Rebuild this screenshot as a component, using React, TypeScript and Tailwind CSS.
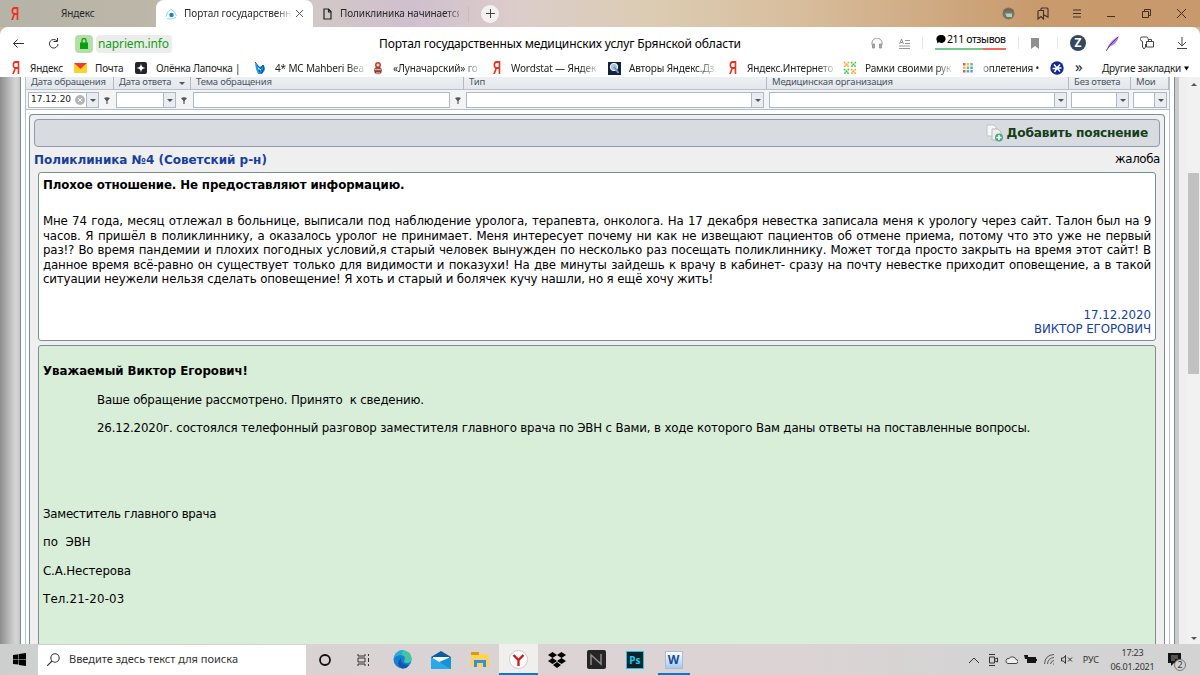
import type { ReactNode } from "react";

const ya = (
  <span className="inline-block w-4 text-center font-['Liberation_Sans'] text-[18px] font-bold leading-4 text-[#f0301c] scale-x-[.62]">
    Я
  </span>
);

const bookmarks = [
  { title: "Яндекс", width: "w-[65px]", icon: ya },
  {
    title: "Почта",
    width: "w-[61px]",
    icon: (
      <svg width="16" height="12" viewBox="0 0 16 12">
        <path d="M1 1h13v10H1z" fill="#fdd32a" />
        <path d="M1 1h13L7.500 7z" fill="#f03c2e" />
      </svg>
    ),
  },
  {
    title: "Олёнка Лапочка |",
    width: "w-[119px]",
    icon: (
      <svg width="14" height="14" viewBox="0 0 14 14">
        <rect x="1" y="1" width="12" height="12" rx="2" fill="#24252b" />
        <path d="M7 2.500 Q7.300 6.700 11.500 7 Q7.300 7.300 7 11.500 Q6.700 7.300 2.500 7 Q6.700 6.700 7 2.500" fill="#fff" />
      </svg>
    ),
  },
  {
    title: "4* MC Mahberi Bea",
    width: "w-[118px]",
    fade: true,
    icon: (
      <svg className="ml-px" width="12" height="14" viewBox="0 0 12 14">
        <path d="M1 2l4 4 5-2 1 5-3 4H4L2 8z" fill="#1d9be2" />
        <path d="M1 1l8 10M9 4l-4 6 3 2 2-5z" stroke="#0a4f93" fill="none" />
        <path d="M4 7l3 2" stroke="#fff" />
      </svg>
    ),
  },
  {
    title: "«Луначарский» го",
    width: "w-[118px]",
    fade: true,
    icon: (
      <svg className="ml-px" width="12" height="14" viewBox="0 0 12 14">
        <circle cx="6" cy="4" r="3" fill="#c0452c" />
        <circle cx="6" cy="9.500" r="3.800" fill="#7c3d6c" />
        <circle cx="6" cy="4" r="1.500" fill="#fbd89c" />
        <path d="M3 8.500h6M4 12h4" stroke="#f5a731" strokeWidth="1.500" />
      </svg>
    ),
  },
  { title: "Wordstat — Яндек", width: "w-[118px]", fade: true, icon: ya },
  {
    title: "Авторы Яндекс.Дз",
    width: "w-[118px]",
    fade: true,
    icon: (
      <svg width="14" height="14" viewBox="0 0 14 14">
        <path d="M1 1h13v13H1z" fill="#13233f" />
        <circle cx="7" cy="6" r="3.700" fill="#a9c5d8" stroke="#fff" />
        <path d="M7 6l4.500 6" stroke="#6d97c3" strokeWidth="2" />
      </svg>
    ),
  },
  { title: "Яндекс.Интернето", width: "w-[118px]", fade: true, icon: ya },
  {
    title: "Рамки своими рук",
    width: "w-[118px]",
    fade: true,
    icon: (
      <svg width="14" height="14" viewBox="0 0 14 14" strokeWidth="1.500" strokeDasharray="1.800 .6">
        <path d="M1 1l5 5M6 1L1 6M8 8l5 5M13 8l-5 5" stroke="#ff9c24" />
        <path d="M8 1l5 5M13 1L8 6M1 8l5 5M6 8l-5 5" stroke="#32cb3c" />
      </svg>
    ),
  },
];

const columns = [
  { title: "Дата обращения", width: "w-[88px]", input: "w-[71px]", value: "17.12.20", arrow: true, funnel: true },
  { title: "Дата ответа", width: "w-[77px]", input: "w-[60px]", arrow: true, funnel: true, sorted: true },
  { title: "Тема обращения", width: "w-[273px]", input: "w-[257px]", funnel: true },
  { title: "Тип", width: "w-[303px]", input: "w-[298px]", arrow: true },
  { title: "Медицинская организация", width: "w-[302px]", input: "w-[298px]", arrow: true },
  { title: "Без ответа", width: "w-[62px]", input: "w-[58px]", arrow: true },
  { title: "Мои", width: "w-[38px]", input: "w-[34px]", arrow: true },
];

const complaint = [
  "Мне 74 года, месяц отлежал в больнице, выписали под наблюдение уролога, терапевта, онколога. На 17 декабря невестка записала меня к урологу через сайт. Талон был на 9",
  "часов. Я пришёл в поликлиннику, а оказалось уролог не принимает. Меня интересует почему ни как не извещают пациентов об отмене приема, потому что это уже не первый",
  "раз!? Во время пандемии и плохих погодных условий,я старый человек вынужден по несколько раз посещать поликлиннику. Может тогда просто закрыть на время этот сайт! В",
  "данное время всё-равно он существует только для видимости и показухи! На две минуты зайдешь к врачу в кабинет- сразу на почту невестке приходит оповещение, а в такой",
];

function Arrow() {
  return <span className="block shrink-0 border-x-[3px] border-t-[3px] border-x-transparent border-t-[#555]" />;
}

function Funnel() {
  return (
    <svg className="ml-[5px] shrink-0" width="6" height="7" viewBox="0 0 6 7">
      <path d="M0 1q3-1.500 6 0L3.600 4v3H2.400V4z" fill="#555" />
    </svg>
  );
}

function Task({ children, className = "" }: { children: ReactNode; className?: string }) {
  return <div className={"flex h-full w-[38.700px] shrink-0 items-center justify-center " + className}>{children}</div>;
}

function Tabs() {
  return (
    <div className="flex h-[27px] shrink-0 items-center bg-[linear-gradient(90deg,#b5b4a7_0px,#bcb6a8_140px,#d2c8c6_313px,#d0bfce_410px,#dccdca_520px,#dcccb3_650px,#d8bd9c_800px,#c89a6c_1040px,#c8996c_1200px)] text-[10px] text-[#282828]">
      <div className="flex w-[156px] items-center pl-[7px]">
        {ya}
        <span className="ml-[38px] tracking-[-0.100px]">Яндекс</span>
      </div>
      <div className="flex h-full w-[157px] items-center rounded-t-lg bg-white">
        <svg className="ml-[9px] shrink-0" width="13" height="12" viewBox="0 0 13 12">
          <circle cx="6.500" cy="7" r="2.300" fill="#2388b8" />
          <path d="M1 8.500Q2 3 6 1.500q4 1.500 5.500 6.500M2 10.500q4 1.500 9-1" fill="none" stroke="#8bd7f0" />
        </svg>
        <span className="ml-[6px] w-[108px] overflow-hidden whitespace-nowrap tracking-[-0.050px] [mask-image:linear-gradient(90deg,#000_85%,transparent)]">
          Портал государственны
        </span>
        <svg className="ml-[4px] shrink-0" width="7" height="7" viewBox="0 0 7 7" stroke="#555">
          <path d="M0 0l7 7M7 0L0 7" />
        </svg>
      </div>
      <svg className="ml-[10px]" width="9" height="12" viewBox="0 0 9 12" fill="none" stroke="#222" strokeWidth="1.200">
        <path d="M1 1h4.500L8 3.500V11H1zM5.500 1v3H8" />
      </svg>
      <span className="ml-[8px] w-[119px] whitespace-nowrap tracking-[-0.100px] [mask-image:linear-gradient(90deg,#000_88%,#0006)]">
        Поликлиника начинается
      </span>
      <span className="ml-[9px] h-4 w-px bg-[#c9bcba]" />
      <span className="ml-3 flex size-[18px] items-center justify-center rounded-full bg-[#f5f1f0]">
        <svg width="9" height="9" viewBox="0 0 9 9" stroke="#444">
          <path d="M4.500 0v9M0 4.500h9" />
        </svg>
      </span>
      <div className="ml-auto flex items-center pr-[14px]">
        <svg width="13" height="13" viewBox="0 0 13 13">
          <circle cx="6.500" cy="6.500" r="6" fill="#6f7765" />
          <path d="M2 4q4-3 9 0" stroke="#8a5545" fill="none" strokeWidth="1.500" />
          <path d="M3 6.500h7v3.500H5z" fill="#b7ccc4" />
        </svg>
        <svg className="ml-[22px]" width="12" height="13" viewBox="0 0 12 13" fill="none" stroke="#3f3025" strokeWidth="1.100">
          <path d="M1 4.500a1 1 0 0 1 1-1h4.500v8.500L4 9.500 1 12zM4 3.500V2a1 1 0 0 1 1-1h5a1 1 0 0 1 1 1v8L7 8" />
        </svg>
        <svg className="ml-[24px]" width="8" height="9" viewBox="0 0 8 9" stroke="#3f3025">
          <path d="M0 1h8M0 4.500h8M0 8h8" />
        </svg>
        <svg className="ml-[26px]" width="9" height="9" viewBox="0 0 9 9" stroke="#3f3025">
          <path d="M0 7.500h8" />
        </svg>
        <svg className="ml-[26px]" width="9" height="9" viewBox="0 0 9 9" fill="none" stroke="#3f3025">
          <path d="M.5 2.500h6v6h-6zM2.500 2V.5h6v6H7" />
        </svg>
        <svg className="ml-[26px]" width="9" height="9" viewBox="0 0 9 9" stroke="#3f3025">
          <path d="M0 0l9 9M9 0L0 9" />
        </svg>
      </div>
    </div>
  );
}

function AddressBar() {
  return (
    <div className="relative flex h-[33px] shrink-0 items-center bg-[#cdb89f]">
      <div className="flex h-full w-full items-center rounded-t-lg bg-white pl-[13px] text-black">
        <svg width="11" height="9" viewBox="0 0 11 9" fill="none" stroke="#333">
          <path d="M11 4.500H.5M4.500.5l-4 4 4 4" />
        </svg>
        <svg className="ml-[24px]" width="11" height="11" viewBox="0 0 11 11" fill="none" stroke="#333">
          <path d="M9 3A4.300 4.300 0 1 0 10 6M5.500 3.500h4V0" />
        </svg>
        <span className="ml-[16px] flex size-[18px] items-center justify-center rounded bg-[#b3dfa9]">
          <svg width="8" height="11" viewBox="0 0 8 11">
            <path d="M0 4.500h8V11H0z" fill="#0ba00b" />
            <path d="M2 5V2.500a2 2 0 0 1 4 0V5" fill="none" stroke="#0ba00b" strokeWidth="1.300" />
          </svg>
        </span>
        <span className="ml-[3px] flex h-[18px] w-[76px] items-center rounded bg-[#ececec] pl-[2px] text-[12px] tracking-[-0.150px] text-[#12a012]">
          napriem.info
        </span>
        <span className="ml-[207px] whitespace-nowrap text-[12px] tracking-[-0.120px]">
          Портал государственных медицинских услуг Брянской области
        </span>
      </div>
      <div className="absolute right-0 top-0 flex h-8 items-center pr-[13px]">
        <svg width="12" height="11" viewBox="0 0 12 11" fill="none" stroke="#999">
          <path d="M1 7V5a5 5 0 0 1 10 0v2" />
          <path d="M1.500 6v4h2V6zM8.500 6v4h2V6z" fill="#aaa" />
        </svg>
        <svg className="ml-[16px]" width="11" height="11" viewBox="0 0 11 11" fill="none" stroke="#999">
          <path d="M.5 6l2-5 2 5M1 4.500h3M6 2.500h5M6 5.500h5M0 8h11M0 10.500h11" />
        </svg>
        <span className="ml-3 h-3 w-px bg-[#e5e5e5]" />
        <div className="ml-[12px] w-[71px] pb-[4px]">
          <div className="flex h-[14px] items-center whitespace-nowrap text-[10.500px] leading-3">
            <svg className="mx-px shrink-0" width="10" height="10" viewBox="0 0 10 10">
              <path d="M5 1a4 4 0 1 1-2 7L1.500 9.500 1 7A4 4 0 0 1 5 1" />
            </svg>
            <span className="tracking-[-0.400px]">211 отзывов</span>
          </div>
          <div className="mt-[2px] flex h-[2px]">
            <span className="w-12 bg-[#72c98b]" />
            <span className="flex-1 bg-[#f4695c]" />
          </div>
        </div>
        <span className="ml-[12px] h-3 w-px bg-[#e5e5e5]" />
        <svg className="ml-3" width="8" height="11" viewBox="0 0 8 11" fill="#909090">
          <path d="M0 0h8v11L4 8l-4 3z" />
        </svg>
        <span className="ml-[18px] h-3 w-px bg-[#e5e5e5]" />
        <span className="ml-[12px] flex size-4 items-center justify-center rounded-full bg-[#33485d] text-[12px] font-bold text-white">
          Z
        </span>
        <svg className="ml-[20px]" width="14" height="15" viewBox="0 0 14 15">
          <path d="M1 13Q4 4 13 0 11 8 3 11z" fill="#b077df" />
          <path d="M0 15Q4 8 12 1" stroke="#6c32a9" fill="none" />
        </svg>
        <svg className="ml-[20px]" width="14" height="14" viewBox="0 0 14 14" fill="none" stroke="#444">
          <path d="M8 3.500V2.500A1.500 1.500 0 0 0 6.500 1H2A1.500 1.500 0 0 0 .5 2.500v1A1.500 1.500 0 0 0 2 5l.5 1v5l1.500 2 1.500-2V8M6.500 5.500h7V11h-7zM8.500 5V3.500h3V5" />
        </svg>
        <svg className="ml-[23px]" width="10" height="12" viewBox="0 0 10 12" fill="none" stroke="#444">
          <path d="M5 0v9M1 5l4 4 4-4M0 11.500h10" />
        </svg>
      </div>
    </div>
  );
}

function Bookmarks() {
  return (
    <div className="flex h-[17px] shrink-0 items-center bg-white pb-px pl-2 text-[10px] leading-[16px] text-[#222]">
      {bookmarks.map((b) => (
        <div key={b.title} className={"flex shrink-0 items-center " + b.width}>
          <span className="flex w-[22px] shrink-0 items-center">{b.icon}</span>
          <span
            className={
              "whitespace-nowrap " +
              (b.fade
                ? "tracking-[-0.150px] [mask-image:linear-gradient(90deg,#000_82%,#0003)]"
                : "tracking-[-0.200px]")
            }
          >
            {b.title}
          </span>
        </div>
      ))}
      <div className="flex flex-1 items-center whitespace-nowrap">
        <svg className="ml-[2px]" width="10" height="10" viewBox="0 0 10 10">
          <path d="M0 0h2.500v2.500H0zM0 7h2.500v2.500H0z" fill="#ed5260" />
          <path d="M3.700 0h2.500v2.500H3.700zM0 3.500h2.500V6H0z" fill="#f6b847" />
          <path d="M7.300 0h2.500v2.500H7.300zM3.700 3.500h2.500V6H3.700z" fill="#64c66f" />
          <path d="M7.300 3.500h2.500V6H7.300zM3.700 7h2.500v2.500H3.700zM7.300 7h2.500v2.500H7.300z" fill="#599ce6" />
        </svg>
        <span className="ml-[10px] w-[57px] tracking-[-0.150px] [mask-image:linear-gradient(90deg,#0005,#000_15%)]">оплетения •</span>
        <svg className="ml-[10px]" width="14" height="14" viewBox="0 0 14 14">
          <circle cx="7" cy="7" r="6.700" fill="#102b91" />
          <path d="M4 3.500l3 3.500 3-3.500M7 7l-2.500 4M7 7h4.500M7 7l3 3.500M2.500 7.500h4" stroke="#fff" strokeWidth="1.500" fill="none" />
        </svg>
        <span className="ml-[11px] w-[10px] pb-[5px] text-[15px] leading-[12px]">»</span>
        <span className="ml-[17px] tracking-[-0.170px]">Другие закладки</span>
        <svg className="ml-[3px]" width="5" height="5" viewBox="0 0 6 5">
          <path d="M0 0h6L3 5z" />
        </svg>
      </div>
    </div>
  );
}

function Filters() {
  return (
    <div className="h-[33px] shrink-0 border-b border-[#b4bdc5] bg-[#f3f4f5] text-[#4b5563]">
      <div className="flex h-[13px] items-start border-b border-[#b9c1ca] bg-gradient-to-b from-[#edf0f3] to-[#e3e7eb]">
        {columns.map((c) => (
          <div
            key={c.title}
            className={"flex h-[13px] shrink-0 items-center justify-between border-r border-[#b2bbc5] pl-[5px] pr-[5px] leading-[9px] whitespace-nowrap " + c.width}
          >
            <span className="-mt-[5px] text-[9.500px] tracking-[-0.200px]">{c.title}</span>
            {c.sorted && <Arrow />}
          </div>
        ))}
      </div>
      <div className="flex items-center pt-[2px]">
        {columns.map((c) => (
          <div key={c.title} className={"flex shrink-0 items-center pl-[2px] " + c.width}>
            <div className={"flex h-[16px] shrink-0 items-center border border-[#afb9c4] bg-white " + c.input}>
              <span className="flex flex-1 items-center pl-[2px] font-['DejaVu_Sans'] text-[9px] text-[#222]">
                {c.value}
                {c.value && (
                  <svg className="ml-[4px] shrink-0" width="10" height="10" viewBox="0 0 10 10">
                    <circle cx="5" cy="5" r="5" fill="#b5b5b5" />
                    <path d="M3 3l4 4M7 3L3 7" stroke="#fff" />
                  </svg>
                )}
              </span>
              {c.arrow && (
                <span className="flex h-full w-3 shrink-0 items-center justify-center border-l border-[#afb9c4] bg-[#e9edf1]">
                  <Arrow />
                </span>
              )}
            </div>
            {c.funnel && <Funnel />}
          </div>
        ))}
      </div>
    </div>
  );
}

function Portal() {
  return (
    <main className="flex h-[567px] shrink-0 overflow-hidden bg-[#efefef]">
      <div className="w-5 shrink-0 bg-[linear-gradient(90deg,#8c8c8c,#c2c2c2_55%,#d6d6d6_80%,#c4c4c4)]" />
      <div className="flex w-[1155px] shrink-0 border-x border-[#78908f] bg-white pl-[4px]">
        <div className="flex w-[1145px] flex-col border-x border-[#b9c2c7] bg-white">
          <Filters />
          <div className="ml-[3px] mr-[4px] mt-[4px] flex-1 rounded-t border border-b-0 border-[#78908f] bg-[#efefef] px-1 pt-1 font-['DejaVu_Sans'] text-[11.800px] text-black">
            <div className="flex h-[28px] items-center justify-end rounded border border-[#8e9bae] bg-[#d8dbe0] pr-[11px]">
              <svg width="18" height="18" viewBox="0 0 18 18">
                <path d="M1 1h7l2 2v9H1z" fill="#f8f8f8" stroke="#c0c2c4" />
                <path d="M6 5h6l3 3v8H6z" fill="#eee" stroke="#b8babc" />
                <circle cx="13" cy="13.500" r="4" fill="#4aa981" />
                <path d="M13 11v5M10.500 13.500h5" stroke="#fff" strokeWidth="1.500" />
              </svg>
              <span className="ml-[3px] text-[12.200px] font-bold tracking-[-0.200px] text-[#123f17]">Добавить пояснение</span>
            </div>
            <div className="flex h-[25px] items-center justify-between">
              <b className="text-[12px] tracking-[-0.030px] text-[#1540a0]">Поликлиника №4 (Советский р-н)</b>
              <span className="tracking-[-0.350px]">жалоба</span>
            </div>
            <section className="mx-[4px] h-[169px] rounded-[3px] border border-[#78908f] bg-white px-[4px] pt-[5px] leading-[14.500px]">
              <h1 className="font-bold tracking-[-0.110px]">Плохое отношение. Не предоставляют информацию.</h1>
              <div className="mt-[21.500px] tracking-[-0.150px]">
                {complaint.map((line) => (
                  <p key={line} className="whitespace-nowrap [text-align-last:justify]">
                    {line}
                  </p>
                ))}
                <p className="whitespace-nowrap">
                  ситуации неужели нельзя сделать оповещение! Я хоть и старый и болячек кучу нашли, но я ещё хочу жить!
                </p>
              </div>
              <div className="mt-[21px] text-right text-[#1540a0]">
                <p>17.12.2020</p>
                <p className="tracking-[-0.060px]">ВИКТОР ЕГОРОВИЧ</p>
              </div>
            </section>
            <section className="mx-[4px] mt-[4px] h-[330px] whitespace-pre rounded-[3px] border border-[#78908f] bg-[#d8eed9] px-[4px] pt-[18px] leading-[14.500px]">
              <p className="font-bold tracking-[-0.030px]">Уважаемый Виктор Егорович!</p>
              <p className="ml-[54px] mt-[14px] tracking-[-0.180px]">Ваше обращение рассмотрено. Принято  к сведению.</p>
              <p className="ml-[54px] mt-[14px] tracking-[-0.150px]">
                26.12.2020г. состоялся телефонный разговор заместителя главного врача по ЭВН с Вами, в ходе которого Вам даны ответы на поставленные вопросы.
              </p>
              <p className="mt-[71px] tracking-[-0.270px]">Заместитель главного врача</p>
              <p className="mt-[14px]">по  ЭВН</p>
              <p className="mt-[14px] tracking-[-0.120px]">С.А.Нестерова</p>
              <p className="mt-[14px] tracking-[0.180px]">Тел.21-20-03</p>
            </section>
          </div>
        </div>
      </div>
      <div className="w-1 shrink-0 bg-[#cbcbcb]" />
      <div className="ml-auto flex w-[13px] shrink-0 flex-col items-center bg-[#f1f1f1] pb-1 pt-[6px]">
        <span className="border-x-[3px] border-b-[3px] border-x-transparent border-b-[#555]" />
        <span className="mt-[87px] h-[201px] w-[11px] bg-[#c1c1c1]" />
        <span className="mt-auto">
          <Arrow />
        </span>
      </div>
    </main>
  );
}

function Taskbar() {
  return (
    <footer className="flex h-[31px] shrink-0 items-center bg-[linear-gradient(90deg,#cdcfcf,#dad3d3_30%,#dcd3d4_65%,#d5d4d4_80%,#d3d3d3)] text-[#333]">
      <div className="flex w-[38px] justify-center">
        <svg width="13" height="13" viewBox="0 0 13 13">
          <path d="M0 2l5.500-.8V6H0zM6 1.100L13 0v6H6zM0 6.500h5.500v5L0 11zM6 6.500h7V13l-7-1z" />
        </svg>
      </div>
      <div className="flex h-[30px] w-[268px] items-center bg-white pl-[9px] text-[11px]">
        <svg width="13" height="13" viewBox="0 0 13 13" fill="none" stroke="#333" strokeWidth="1.100">
          <circle cx="8" cy="5" r="4.200" />
          <path d="M5 8l-5 5" />
        </svg>
        <span className="ml-[9px]">Введите здесь текст для поиска</span>
      </div>
      <Task>
        <svg width="12" height="12" viewBox="0 0 12 12" fill="none" stroke="#111" strokeWidth="1.800">
          <circle cx="6" cy="6" r="5" />
        </svg>
      </Task>
      <Task className="pr-[2px]">
        <svg width="13" height="12" viewBox="0 0 13 12" fill="none" stroke="#333">
          <path d="M1 0v2h7V0M1 4h7v4H1zM1 12v-2h7v2M11.500 0v2M11.500 4v4M11.500 10v2" />
        </svg>
      </Task>
      <Task>
        <svg width="19" height="19" viewBox="0 0 19 19">
          <circle cx="9.500" cy="9.500" r="9" fill="#1580d5" />
          <path d="M1 8Q3 0 10 0q8 1 9 9c-1 5-7 5-8 2q3-5-3-6-5 0-7 3" fill="#42c7a5" />
          <path d="M1 8Q3 0 10 0l-1 5Q4 4 1 8" fill="#2aa9dc" />
          <path d="M8 8q-1 7 8 7-3 5-8 3-6-4 0-10" fill="#1258a8" />
        </svg>
      </Task>
      <Task>
        <svg width="20" height="18" viewBox="0 0 20 18">
          <path d="M0 6l10-6 10 6v12H0z" fill="#0c5c9f" />
          <path d="M2 6h16v7H2z" fill="#f6f6f6" />
          <path d="M0 6l10 6 10-6v12H0z" fill="#29a9e8" />
          <path d="M20 6v12L8 11z" fill="#1791d8" />
        </svg>
      </Task>
      <Task>
        <svg width="18" height="16" viewBox="0 0 18 16">
          <path d="M0 0h8l1 2h9v13H0z" fill="#ffd25b" />
          <path d="M0 0h8v3H0z" fill="#d99a17" />
          <path d="M3 15V8h12v7h-3v-4H6v4z" fill="#368fdc" />
        </svg>
      </Task>
      <Task className="border-b-2 border-[#0b78d0] bg-[#f1eeee] pt-[2px]">
        <svg width="19" height="19" viewBox="0 0 19 19">
          <circle cx="9.500" cy="9.500" r="9" fill="#fff" stroke="#ccc" />
          <path d="M4.500 5L9.500 10l5-5M9.500 10v6" stroke="#d01818" strokeWidth="2.300" fill="none" />
        </svg>
      </Task>
      <Task>
        <svg width="18" height="16" viewBox="0 0 18 16">
          <path d="M4.500 0L9 3 4.500 6 0 3zM13.500 0L18 3l-4.500 3L9 3zM4.500 6L9 9l-4.500 3L0 9zM13.500 6L18 9l-4.500 3L9 9zM9 10l4 3-4 3-4-3z" />
        </svg>
      </Task>
      <Task>
        <svg width="19" height="19" viewBox="0 0 19 19">
          <rect width="19" height="19" rx="2" fill="#252525" />
          <path d="M4 15V5l10 9V4" stroke="#8b8b8b" strokeWidth="1.500" fill="none" />
        </svg>
      </Task>
      <Task>
        <span className="flex size-[18px] items-center justify-center border border-[#21c4dd] bg-[#07242e] text-[10px] font-bold leading-none text-[#28c8e8]">
          Ps
        </span>
      </Task>
      <Task>
        <div className="flex h-full w-8 items-center justify-center border-b-2 border-[#0b78d0] pt-[2px]">
          <span className="flex size-[18px] items-center justify-center border border-[#a4bddc] bg-gradient-to-b from-white to-[#a6c8ef] text-[12px] font-bold leading-none text-[#174a9b]">
            W
          </span>
        </div>
      </Task>
      <div className="ml-auto flex items-center">
        <svg width="10" height="6" viewBox="0 0 10 6" fill="none" stroke="#333">
          <path d="M0 6l5-5 5 5" />
        </svg>
        <svg className="ml-[9px]" width="10" height="12" viewBox="0 0 10 12" fill="none" stroke="#333">
          <path d="M1.500 3h5v6h-5zM1 .5h6M1 11.500h6M7 5l2.500-1v4L7 7" />
        </svg>
        <svg className="ml-[7px]" width="13" height="9" viewBox="0 0 13 9">
          <path d="M3 8.500h8a2 2 0 0 0 0-4 4 4 0 0 0-7-1 2.500 2.500 0 0 0-1 5" fill="#eee" stroke="#444" />
        </svg>
        <svg className="ml-[6px]" width="13" height="9" viewBox="0 0 13 9">
          <path d="M3 2h9v6H3zM0 0h4v4H1zM12 4h1v2h-1z" fill="#151515" />
        </svg>
        <svg className="ml-[7px]" width="11" height="11" viewBox="0 0 11 11" fill="none" stroke="#555">
          <path d="M.5 10Q1 1 10 .5M3.500 10Q4 4 10 3.500M6.500 10Q7 7 10 6.500M9 10h1" />
        </svg>
        <svg className="ml-[6px]" width="12" height="9" viewBox="0 0 12 9" fill="none" stroke="#333">
          <path d="M.5 3v3h2l2 2.500v-8L2.500 3zM7 2.500l4 4M11 2.500l-4 4" />
        </svg>
        <span className="ml-[10px] text-[9px]">РУС</span>
        <div className="ml-[11px] w-[45px] text-center text-[9px] leading-[14px] tracking-[-0.200px]">
          <p>17:23</p>
          <p>06.01.2021</p>
        </div>
        <div className="relative ml-[13px] mr-[14px] h-[20px] w-[18px] translate-y-[2px]">
          <svg width="13" height="14" viewBox="0 0 13 14">
            <path d="M0 1h13v10H6l-3 3v-3H0z" fill="#151515" />
            <path d="M3 4h7M3 6h7M3 8h4" stroke="#ccc" strokeWidth=".7" />
          </svg>
          <span className="absolute left-[6px] top-[7px] flex size-3 items-center justify-center rounded-full border border-[#777] bg-[#d3d3d3] text-[9px] leading-none">
            2
          </span>
        </div>
      </div>
    </footer>
  );
}

export default function App() {
  return (
    <div className="flex h-[675px] w-[1200px] flex-col overflow-hidden bg-[#d3c5ba] font-['Noto_Sans']">
      <Tabs />
      <AddressBar />
      <Bookmarks />
      <Portal />
      <Taskbar />
    </div>
  );
}
